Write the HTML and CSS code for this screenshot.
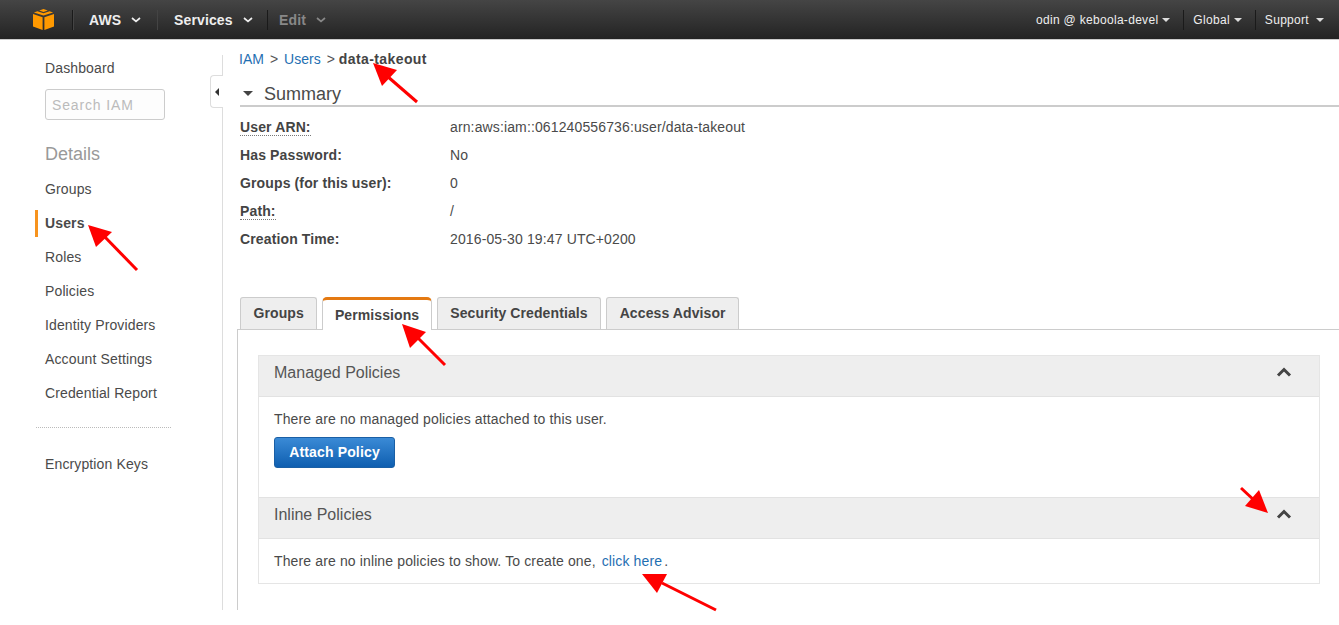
FILE: index.html
```html
<!DOCTYPE html>
<html lang="en">
<head>
<meta charset="utf-8">
<title>IAM</title>
<link rel="stylesheet" href="styles.css">
</head>
<body>
<header class="topbar">
  <div class="logo-cell">
    <svg class="logo" viewBox="0 0 21 21" width="21" height="21"><path fill="#f90" d="M0 5l9.6 3.2V21L0 17.6z"/><path fill="#f90" d="M21 5l-9.6 3.2V21L21 17.6z"/><path fill="#f90" d="M10.5 0L6.2 1.5 10.5 3l4.3-1.5zM4.4 2.2L.9 3.4l9.6 3.2 9.6-3.2-3.5-1.2-6.1 2.1z"/></svg>
  </div>
  <div class="top-item top-aws">AWS<svg class="chev" viewBox="0 0 10 6" width="10" height="6"><path d="M1 1l4 3.4L9 1" fill="none" stroke="currentColor" stroke-width="1.7"/></svg></div>
  <div class="top-item top-services">Services<svg class="chev" viewBox="0 0 10 6" width="10" height="6"><path d="M1 1l4 3.4L9 1" fill="none" stroke="currentColor" stroke-width="1.7"/></svg></div>
  <div class="top-item top-edit">Edit<svg class="chev" viewBox="0 0 10 6" width="10" height="6"><path d="M1 1l4 3.4L9 1" fill="none" stroke="currentColor" stroke-width="1.7"/></svg></div>
  <div class="top-right">
    <div class="right-item right-user">odin @ keboola-devel<span class="caret"></span></div>
    <div class="right-item">Global<span class="caret"></span></div>
    <div class="right-item right-last">Support<span class="caret"></span></div>
  </div>
</header>
<div class="layout">
  <aside class="sidebar">
    <a class="nav-item nav-first">Dashboard</a>
    <div class="search">Search IAM</div>
    <h2 class="nav-title">Details</h2>
    <a class="nav-item">Groups</a>
    <a class="nav-item nav-active">Users</a>
    <a class="nav-item">Roles</a>
    <a class="nav-item">Policies</a>
    <a class="nav-item">Identity Providers</a>
    <a class="nav-item">Account Settings</a>
    <a class="nav-item">Credential Report</a>
    <div class="nav-sep"></div>
    <a class="nav-item">Encryption Keys</a>
    <div class="collapse"><span class="collapse-arrow"></span></div>
  </aside>
  <main class="main">
    <nav class="crumbs"><a class="link">IAM</a><span class="gt">&gt;</span><a class="link">Users</a><span class="gt gt-last">&gt;</span><b class="crumb-current">data-takeout</b></nav>
    <div class="summary-head"><span class="tri"></span><span class="summary-title">Summary</span></div>
    <dl class="facts">
      <div class="fact"><dt><span class="dotted">User ARN:</span></dt><dd>arn:aws:iam::061240556736:user/data-takeout</dd></div>
      <div class="fact"><dt>Has Password:</dt><dd>No</dd></div>
      <div class="fact"><dt>Groups (for this user):</dt><dd>0</dd></div>
      <div class="fact"><dt><span class="dotted">Path:</span></dt><dd>/</dd></div>
      <div class="fact"><dt>Creation Time:</dt><dd>2016-05-30 19:47 UTC+0200</dd></div>
    </dl>
    <div class="tabs">
      <div class="tab">Groups</div>
      <div class="tab tab-active">Permissions</div>
      <div class="tab">Security Credentials</div>
      <div class="tab">Access Advisor</div>
    </div>
    <section class="tab-body">
      <div class="panels">
        <div class="panel-head"><span>Managed Policies</span><svg class="up" viewBox="0 0 16 10" width="16" height="10"><path d="M2 8.5l6-6 6 6" fill="none" stroke="#444" stroke-width="3"/></svg></div>
        <div class="panel-body panel-managed">
          <p class="panel-text">There are no managed policies attached to this user.</p>
          <button class="btn">Attach Policy</button>
        </div>
        <div class="panel-head panel-head-line"><span>Inline Policies</span><svg class="up" viewBox="0 0 16 10" width="16" height="10"><path d="M2 8.5l6-6 6 6" fill="none" stroke="#444" stroke-width="3"/></svg></div>
        <div class="panel-body panel-inline">
          <p class="panel-text">There are no inline policies to show. To create one,<a class="link click">click here</a><span class="dot">.</span></p>
        </div>
      </div>
    </section>
  </main>
</div>
<svg class="arrows" width="1339" height="625" viewBox="0 0 1339 625">
  <g stroke="#f00" stroke-width="3" fill="#f00">
    <path d="M417 102L387 76" fill="none"/><path stroke="none" d="M373 63L397 70 382 86z"/>
    <path d="M137 270L102 234" fill="none"/><path stroke="none" d="M88 225L112 232 96 247z"/>
    <path d="M445 365L416 336" fill="none"/><path stroke="none" d="M402 324L426 332 410 348z"/>
    <path d="M1241 488L1256 502" fill="none"/><path stroke="none" d="M1268 513L1259 490 1245 506z"/>
    <path d="M716 610L662 583" fill="none"/><path stroke="none" d="M642 574L667 574 657 593z"/>
  </g>
</svg>
</body>
</html>
```
FILE: styles.css
```css
* { box-sizing: border-box; }
html, body { margin: 0; padding: 0; }
body {
  position: relative;
  width: 1339px;
  height: 625px;
  overflow: hidden;
  background: #fff;
  font-family: "Liberation Sans", Arial, sans-serif;
  font-size: 14px;
  letter-spacing: 0.13px;
  color: #4a4a4a;
}
.topbar {
  display: flex;
  align-items: center;
  height: 40px;
  background: linear-gradient(#454545, #232323);
  border-bottom: 1px solid #ccc;
  color: #fff;
}
.logo-cell { display: flex; align-items: center; width: 73px; height: 20px; padding-left: 33px; border-right: 1px solid #1a1a1a; }
.logo { display: block; margin-top: -1px; }
.top-item {
  display: flex;
  align-items: center;
  height: 20px;
  font-size: 14px;
  font-weight: bold;
  color: #eee;
  border-left: 1px solid #444;
}
.chev { margin-left: 10px; display: block; }
.top-aws { width: 84px; padding-left: 15px; }
.top-services { width: 110px; padding-left: 16px; }
.top-edit { padding-left: 11px; color: #888; border-left: 1px solid #1a1a1a; }
.top-right { display: flex; align-items: center; margin-left: auto; }
.right-item {
  display: flex;
  align-items: center;
  height: 20px;
  padding: 0 13px 0 9px;
  font-size: 12px;
  letter-spacing: 0.3px;
  color: #eee;
  border-left: 1px solid #1a1a1a;
}
.right-user { border-left: 0; }
.right-last { padding-right: 15px; }
.right-last .caret { margin-left: 7px; }
.caret {
  width: 0; height: 0; margin-left: 4px; margin-top: 1px;
  border-left: 4px solid transparent;
  border-right: 4px solid transparent;
  border-top: 4px solid #ddd;
}
.layout { display: flex; align-items: flex-start; height: 570px; padding-top: 15px; }
.sidebar {
  position: relative;
  flex: none;
  width: 223px;
  height: 555px;
  padding: 0 0 0 35px;
  border-right: 1px solid #ddd;
}
.nav-item {
  display: flex;
  align-items: center;
  height: 34px;
  padding-left: 10px;
  color: #4a4a4a;
  font-size: 14px;
}
.nav-first { height: 26px; }
.search {
  width: 120px;
  height: 31px;
  margin: 8px 0 0 10px;
  padding: 0 6px;
  line-height: 30px;
  font-size: 14px;
  letter-spacing: 0.85px;
  color: #bbb;
  border: 1px solid #ccc;
  border-radius: 3px;
  background: #fdfdfd;
}
.nav-title {
  margin: 21px 0 5px 10px;
  font-size: 18px;
  line-height: 26px;
  font-weight: normal;
  letter-spacing: 0;
  color: #999;
}
.nav-active {
  font-weight: bold;
  background: linear-gradient(#f7931e, #f7931e) left center / 3px 27px no-repeat;
}
.nav-sep { width: 135px; margin: 17px 0 19px 1px; border-top: 1px dotted #bbb; }
.collapse {
  position: absolute;
  top: 20px;
  right: -1px;
  width: 13px;
  height: 33px;
  display: flex;
  align-items: center;
  justify-content: center;
  background: #fff;
  border: 1px solid #ddd;
  border-right: 0;
  border-radius: 4px 0 0 4px;
}
.collapse-arrow {
  width: 0; height: 0;
  border-top: 4px solid transparent;
  border-bottom: 4px solid transparent;
  border-right: 4px solid #333;
}
.main { flex: 1; min-width: 0; padding-left: 15px; }
.crumbs { display: flex; align-items: center; height: 10px; padding-left: 1px; margin-top: -1px; font-size: 14px; letter-spacing: 0; white-space: nowrap; }
.link { color: #1f6fb2; }
.gt { margin: 0 6px; color: #555; }
.gt-last { margin-right: 4px; }
.crumb-current { font-size: 14px; letter-spacing: 0.4px; color: #444; }
.summary-head {
  display: flex;
  align-items: center;
  height: 29px;
  margin-top: 14px;
  margin-left: 2px;
  padding-left: 3px;
  border-bottom: 2px solid #ccc;
}
.tri { width: 0; height: 0; margin-top: 3px; border-left: 5px solid transparent; border-right: 5px solid transparent; border-top: 5px solid #444; margin-right: 11px; }
.summary-title { font-size: 18px; letter-spacing: 0; color: #4a4a4a; margin-top: 5px; }
.facts { margin: 6px 0 0 2px; }
.fact { display: flex; align-items: center; height: 28px; }
.fact dt { width: 210px; font-weight: bold; color: #444; }
.fact dd { margin: 0; color: #4a4a4a; }
.dotted { border-bottom: 1px dotted #777; }
.tabs { display: flex; align-items: flex-end; gap: 5px; margin: 44px 0 0 2px; padding-left: 0; position: relative; z-index: 1; }
.tab {
  height: 32px;
  padding: 0 12.5px 1px;
  display: flex;
  align-items: center;
  font-size: 14px;
  font-weight: bold;
  letter-spacing: 0.1px;
  color: #444;
  background: #eee;
  border: 1px solid #ccc;
  border-bottom: 0;
  border-radius: 3px 3px 0 0;
}
.tab-active {
  background: #fff;
  border-top: 3px solid #e47911;
  border-radius: 5px 5px 0 0;
  height: 33px;
  margin-bottom: -1px;
  padding: 0 11.5px 1px;
}
.tab-body {
  height: 281px;
  margin-left: -1px;
  padding: 25px 19px 0 20px;
  border-left: 1px solid #ccc;
  border-top: 1px solid #ccc;
}
.panels { border: 1px solid #e5e5e5; }
.panel-head {
  display: flex;
  align-items: center;
  justify-content: space-between;
  height: 41px;
  padding: 0 27px 7px 15px;
  font-size: 16px;
  letter-spacing: 0;
  color: #555;
  background: #eee;
  border-bottom: 1px solid #e2e2e2;
}
.panel-head-line { border-top: 1px solid #e2e2e2; height: 42px; }
.panel-body { padding: 0 15px; background: #fff; }
.panel-managed { height: 100px; padding-top: 14px; }
.panel-inline { height: 44px; padding-top: 14px; }
.panel-text { margin: 0; font-size: 14px; line-height: 16px; color: #4a4a4a; }
.click { margin-left: 6px; }
.dot { margin-left: 2px; }
.btn {
  display: block;
  width: 121px;
  height: 31px;
  margin-top: 10px;
  padding: 0 0 2px;
  font: bold 14px "Liberation Sans", Arial, sans-serif;
  letter-spacing: 0.15px;
  color: #fff;
  background: linear-gradient(#3a8ad6, #0f5fb0);
  border: 1px solid #1a5fa5;
  border-radius: 3px;
}
.up { display: block; margin-top: -1px; }
.arrows { position: absolute; left: 0; top: 0; z-index: 2; pointer-events: none; }
```
